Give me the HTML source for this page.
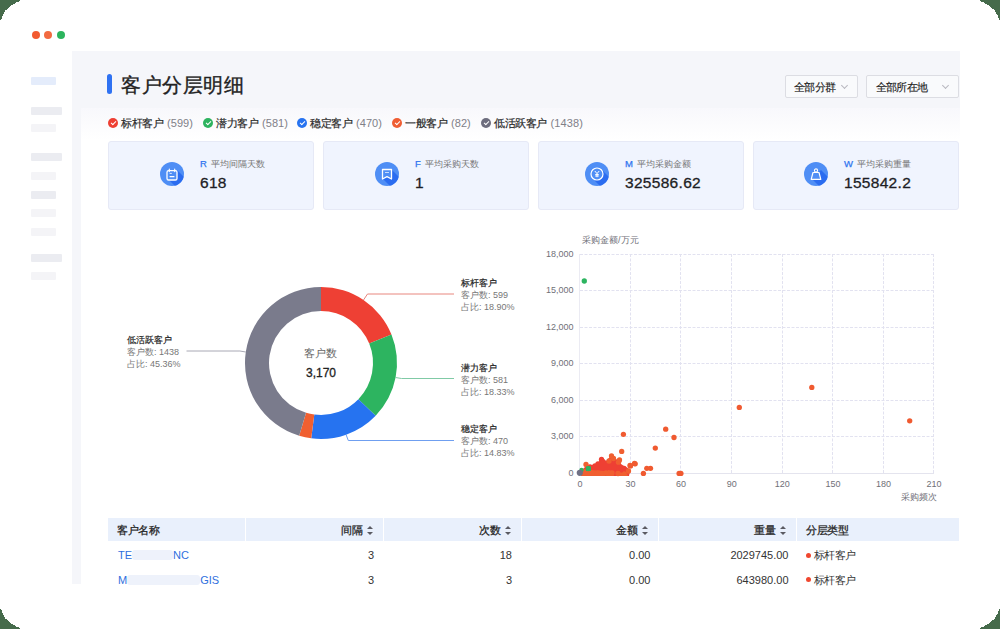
<!DOCTYPE html>
<html><head><meta charset="utf-8">
<style>
*{margin:0;padding:0;box-sizing:border-box}
html,body{width:1000px;height:629px;overflow:hidden;background:#466b4b;font-family:"Liberation Sans",sans-serif}
#win{position:absolute;left:0;top:0;width:1000px;height:629px;background:#fff;overflow:hidden}
.dot{position:absolute;width:8px;height:8px;border-radius:50%;top:30.5px}
.sb{position:absolute;left:31px;height:8px;border-radius:1px}
.sb.g{background:#ebecf1;width:31px}
.sb.l{background:#f4f4f7;width:25px}
#main{position:absolute;left:72px;top:51px;width:888px;height:533px;background:#f5f6fa}
#content{position:absolute;left:81px;top:108px;width:879px;height:476px;background:linear-gradient(#f8f8fc 0px,#fbfbfd 14px,#fff 32px)}
.abs{position:absolute;white-space:nowrap}

.dd{position:absolute;top:75px;height:23px;border:1px solid #dcdde3;border-radius:2px;background:#f9fafc}
.dd span{position:absolute;top:4px;font-size:11px;letter-spacing:-0.6px;line-height:14px;color:#222;-webkit-text-stroke:0.15px #222}
.dd i{position:absolute;top:7px;width:5px;height:5px;border-right:1px solid #b8b8c0;border-bottom:1px solid #b8b8c0;transform:rotate(45deg)}
.lg{position:absolute;top:115px;height:16px;white-space:nowrap;font-size:11px;letter-spacing:-0.4px;line-height:16px;color:#2a2a2a;-webkit-text-stroke:0.2px #2a2a2a}
.lg b{position:absolute;left:0;top:3px;width:10px;height:10px;border-radius:50%}
.lg b:after{content:"";position:absolute;left:3px;top:2.5px;width:4px;height:2px;border-left:1.3px solid #fff;border-bottom:1.3px solid #fff;transform:rotate(-45deg)}
.lg{padding-left:13px}
.lg em{font-style:normal;color:#808088;-webkit-text-stroke:0;margin-left:3.5px;letter-spacing:0.1px}

.card{position:absolute;top:141px;width:206px;height:69px;background:#f0f4fe;border:1px solid #e6e9f6;border-radius:3px}
.ico{position:absolute;top:20px;width:24px;height:24px;border-radius:50%;background:#4f8ef5;overflow:hidden}
.ico svg{position:absolute;left:0;top:0}
.klab{position:absolute;top:16px;font-size:8.9px;line-height:12px;color:#777;white-space:nowrap}
.klab b{color:#2f74ef;font-weight:400;-webkit-text-stroke:0.25px #2f74ef;margin-right:4px;font-size:9.5px}
.kval{position:absolute;top:30.5px;font-size:15.5px;letter-spacing:0.3px;line-height:20px;color:#1d1d24;font-weight:400;-webkit-text-stroke:0.3px #1d1d24;white-space:nowrap}

.dl{position:absolute;font-size:9px;line-height:12.3px;color:#777;white-space:nowrap}
.dl b{display:block;color:#222;font-weight:400;-webkit-text-stroke:0.2px #222}

.th{position:absolute;top:518px;height:23px;background:#e9f0fc;font-size:11px;line-height:25px;letter-spacing:-0.4px;color:#222;font-weight:400;-webkit-text-stroke:0.25px #222;white-space:nowrap}
.th.r{text-align:right}
.sort{display:inline-block;width:6px;height:9px;position:relative;margin-left:4.5px;vertical-align:-1px}
.sort:before{content:"";position:absolute;left:0;top:0;border-left:3px solid transparent;border-right:3px solid transparent;border-bottom:3.5px solid #5a5a62}
.sort:after{content:"";position:absolute;left:0;top:5.5px;border-left:3px solid transparent;border-right:3px solid transparent;border-top:3.5px solid #5a5a62}
.td{position:absolute;font-size:11px;line-height:14px;color:#333;white-space:nowrap}
.td.r{text-align:right}
.lnk{color:#2f6fde}
.blur{display:inline-block;height:10px;background:#eef2fb;vertical-align:-1px;border-radius:3px}
.rdot{display:inline-block;width:5px;height:5px;border-radius:50%;background:#f0472f;margin-right:2.5px;vertical-align:1.5px}
</style></head><body>
<div id="win">
  <div class="dot" style="left:32px;background:#f25a30"></div>
  <div class="dot" style="left:44px;background:#f26a40"></div>
  <div class="dot" style="left:57px;background:#2cb45d"></div>

  <div class="sb" style="left:31px;top:77px;width:25px;background:#e4ecfb"></div>
  <div class="sb g" style="top:107px"></div>
  <div class="sb l" style="top:124px"></div>
  <div class="sb g" style="top:153px"></div>
  <div class="sb l" style="top:172px"></div>
  <div class="sb g" style="top:191px;width:25px"></div>
  <div class="sb l" style="top:209px"></div>
  <div class="sb l" style="top:228px"></div>
  <div class="sb g" style="top:254px"></div>
  <div class="sb l" style="top:272px"></div>

  <div id="main"></div>
  <div id="content"></div>

  <div class="abs" style="left:107px;top:74px;width:5px;height:20px;border-radius:3px;background:#2f72f2"></div>
  <div class="abs" id="title" style="left:121px;top:72px;font-size:20px;letter-spacing:0.5px;-webkit-text-stroke:0.35px #222;line-height:26px;color:#222;font-weight:500">客户分层明细</div>

  <div class="dd" style="left:785px;width:73px"><span style="left:8px">全部分群</span><i style="left:56px"></i></div>
  <div class="dd" style="left:866px;width:93px"><span style="left:8.5px">全部所在地</span><i style="left:76px"></i></div>

  <div class="lg" style="left:108px"><b style="background:#ee3f33"></b><span>标杆客户</span><em>(599)</em></div>
  <div class="lg" style="left:203px"><b style="background:#2db35f"></b><span>潜力客户</span><em>(581)</em></div>
  <div class="lg" style="left:297px"><b style="background:#2773f0"></b><span>稳定客户</span><em>(470)</em></div>
  <div class="lg" style="left:392px"><b style="background:#ef5d33"></b><span>一般客户</span><em>(82)</em></div>
  <div class="lg" style="left:481px"><b style="background:#6d6d7e"></b><span>低活跃客户</span><em>(1438)</em></div>
  <div class="card" style="left:108px">
    <div class="ico" style="left:51px"><svg width="24" height="24" viewBox="0 0 24 24"><path d="M17 8 L32 23 L32 32 L23 32 L8 17 Z" fill="#2b6cf0"/><rect x="7" y="8.6" width="10" height="9.4" rx="1.6" fill="#4f8ef5" stroke="#fff" stroke-width="1.3"/><path d="M9.3 7.2v2.4M14.7 7.2v2.4" stroke="#fff" stroke-width="1.2" stroke-linecap="round"/><path d="M9.6 14.6h4.8" stroke="#fff" stroke-width="1.3"/><path d="M9.6 11.4h2.2" stroke="#fff" stroke-width="1" opacity=".8"/></svg></div>
    <div class="klab" style="left:91px"><b>R</b>平均间隔天数</div>
    <div class="kval" style="left:91px">618</div>
  </div>
  <div class="card" style="left:323px">
    <div class="ico" style="left:51px"><svg width="24" height="24" viewBox="0 0 24 24"><path d="M17 8 L32 23 L32 32 L23 32 L8 17 Z" fill="#2b6cf0"/><path d="M7.5 7.5h9v9.5l-4.5-2.3l-4.5 2.3z" fill="#4f8ef5" stroke="#fff" stroke-width="1.3" stroke-linejoin="round"/><path d="M10 10.5h4" stroke="#fff" stroke-width="1" opacity=".7"/></svg></div>
    <div class="klab" style="left:91px"><b>F</b>平均采购天数</div>
    <div class="kval" style="left:91px">1</div>
  </div>
  <div class="card" style="left:538px">
    <div class="ico" style="left:46px"><svg width="24" height="24" viewBox="0 0 24 24"><path d="M17 8 L32 23 L32 32 L23 32 L8 17 Z" fill="#2b6cf0"/><circle cx="12" cy="12" r="6" fill="#4f8ef5" stroke="#fff" stroke-width="1.2"/><path d="M9.8 9l2.2 2.6l2.2-2.6M12 11.6v3.6M10.2 12.6h3.6M10.2 14h3.6" stroke="#fff" stroke-width="1" fill="none"/></svg></div>
    <div class="klab" style="left:86px"><b>M</b>平均采购金额</div>
    <div class="kval" style="left:86px">325586.62</div>
  </div>
  <div class="card" style="left:753px">
    <div class="ico" style="left:50px"><svg width="24" height="24" viewBox="0 0 24 24"><path d="M17 8 L32 23 L32 32 L23 32 L8 17 Z" fill="#2b6cf0"/><circle cx="12" cy="8.5" r="1.6" fill="none" stroke="#fff" stroke-width="1.1"/><path d="M9 10.5h6l1.8 6.8h-9.6z" fill="#4f8ef5" stroke="#fff" stroke-width="1.2" stroke-linejoin="round"/></svg></div>
    <div class="klab" style="left:90px"><b>W</b>平均采购重量</div>
    <div class="kval" style="left:90px">155842.2</div>
  </div>
<!--CHARTS--><svg class="abs" style="left:0;top:0" width="1000" height="629" viewBox="0 0 1000 629">
<g><path d="M321.00 287.00A76 76 0 0 1 391.48 334.56L369.22 343.54A52 52 0 0 0 321.00 311.00Z" fill="#ee4034"/><path d="M391.48 334.56A76 76 0 0 1 375.66 415.80L358.40 399.13A52 52 0 0 0 369.22 343.54Z" fill="#2db460"/><path d="M375.66 415.80A76 76 0 0 1 311.24 438.37L314.32 414.57A52 52 0 0 0 358.40 399.13Z" fill="#2673f0"/><path d="M311.24 438.37A76 76 0 0 1 299.17 435.80L306.06 412.81A52 52 0 0 0 314.32 414.57Z" fill="#f05f30"/><path d="M299.17 435.80A76 76 0 0 1 321.00 287.00L321.00 311.00A52 52 0 0 0 306.06 412.81Z" fill="#7a7b8c"/></g><path d="M363.5 300L367.5 294H454" stroke="#e8877f" fill="none" stroke-width="1"/>
<path d="M395.6 377.5L401.5 378.5H454" stroke="#80caa6" fill="none" stroke-width="1"/>
<path d="M346.1 434.7L348.3 440.5H454" stroke="#6f9ff0" fill="none" stroke-width="1"/>
<path d="M245.8 352L239.9 351H186.5" stroke="#a8a8b4" fill="none" stroke-width="1"/>
<g><path d="M580 254.5H934" stroke="#e2e2f0" stroke-dasharray="3 1.5" stroke-width="1"/><path d="M580 290.5H934" stroke="#e2e2f0" stroke-dasharray="3 1.5" stroke-width="1"/><path d="M580 327.5H934" stroke="#e2e2f0" stroke-dasharray="3 1.5" stroke-width="1"/><path d="M580 363.5H934" stroke="#e2e2f0" stroke-dasharray="3 1.5" stroke-width="1"/><path d="M580 400.5H934" stroke="#e2e2f0" stroke-dasharray="3 1.5" stroke-width="1"/><path d="M580 436.5H934" stroke="#e2e2f0" stroke-dasharray="3 1.5" stroke-width="1"/><path d="M630.5 254V473" stroke="#e2e2f0" stroke-dasharray="3 1.5" stroke-width="1"/><path d="M680.5 254V473" stroke="#e2e2f0" stroke-dasharray="3 1.5" stroke-width="1"/><path d="M731.5 254V473" stroke="#e2e2f0" stroke-dasharray="3 1.5" stroke-width="1"/><path d="M782.5 254V473" stroke="#e2e2f0" stroke-dasharray="3 1.5" stroke-width="1"/><path d="M832.5 254V473" stroke="#e2e2f0" stroke-dasharray="3 1.5" stroke-width="1"/><path d="M883.5 254V473" stroke="#e2e2f0" stroke-dasharray="3 1.5" stroke-width="1"/><path d="M933.5 254V473" stroke="#e2e2f0" stroke-dasharray="3 1.5" stroke-width="1"/><path d="M579.5 254V473.5" stroke="#ebebf3" stroke-width="1"/><path d="M580 473.5H934" stroke="#e4e4ee" stroke-width="1"/></g>
<g font-family="Liberation Sans, sans-serif" font-size="9" fill="#707078"><text x="573.5" y="475.7" text-anchor="end">0</text><text x="573.5" y="439.2" text-anchor="end">3,000</text><text x="573.5" y="402.7" text-anchor="end">6,000</text><text x="573.5" y="366.2" text-anchor="end">9,000</text><text x="573.5" y="329.7" text-anchor="end">12,000</text><text x="573.5" y="293.2" text-anchor="end">15,000</text><text x="573.5" y="256.7" text-anchor="end">18,000</text><text x="580.0" y="486.8" text-anchor="middle">0</text><text x="630.6" y="486.8" text-anchor="middle">30</text><text x="681.1" y="486.8" text-anchor="middle">60</text><text x="731.7" y="486.8" text-anchor="middle">90</text><text x="782.3" y="486.8" text-anchor="middle">120</text><text x="832.9" y="486.8" text-anchor="middle">150</text><text x="883.4" y="486.8" text-anchor="middle">180</text><text x="934.0" y="486.8" text-anchor="middle">210</text>
<text x="582" y="242.5">采购金额/万元</text><text x="937" y="499.5" text-anchor="end">采购频次</text></g>
<g><path d="M582 476L582 470L586 466L592 465L598 463L602 457L606 461L610 457L614 458L618 460L621 464L624 466L628 468L630 471L629 476Z" fill="#ee4034"/><path d="M581 476L581 470L590 470L605 471L605 476Z" fill="#f05f30"/><path d="M606 476L608 470L612 471L614 476Z" fill="#f05f30"/><path d="M617 476L622 470L626 472L628 476Z" fill="#f05f30"/><circle cx="590" cy="467" r="2.65" fill="#ee4034"/><circle cx="595" cy="466" r="2.65" fill="#ee4034"/><circle cx="598" cy="464" r="2.65" fill="#ee4034"/><circle cx="601.5" cy="459.5" r="2.65" fill="#ee4034"/><circle cx="603" cy="462" r="2.65" fill="#ee4034"/><circle cx="606" cy="465" r="2.65" fill="#ee4034"/><circle cx="624" cy="468.5" r="2.65" fill="#ee4034"/><circle cx="621" cy="470" r="2.65" fill="#ee4034"/><circle cx="614" cy="468" r="2.65" fill="#ee4034"/><circle cx="583.5" cy="471.5" r="2.65" fill="#f05f30"/><circle cx="586" cy="464.5" r="2.65" fill="#f05f30"/><circle cx="609" cy="461" r="2.65" fill="#f05f30"/><circle cx="611.5" cy="456" r="2.65" fill="#f05f30"/><circle cx="613.5" cy="458.5" r="2.65" fill="#f05f30"/><circle cx="618.5" cy="462.2" r="2.65" fill="#f05f30"/><circle cx="619.5" cy="460" r="2.65" fill="#f05f30"/><circle cx="621.7" cy="451.4" r="2.65" fill="#f05f30"/><circle cx="628.5" cy="471" r="2.65" fill="#f05f30"/><circle cx="630" cy="465.5" r="2.65" fill="#f05f30"/><circle cx="634.5" cy="463.5" r="2.65" fill="#f05f30"/><circle cx="585" cy="473" r="2.65" fill="#f05f30"/><circle cx="592" cy="473" r="2.65" fill="#f05f30"/><circle cx="598" cy="473" r="2.65" fill="#f05f30"/><circle cx="606" cy="473" r="2.65" fill="#f05f30"/><circle cx="612" cy="473" r="2.65" fill="#f05f30"/><circle cx="618" cy="473.5" r="2.65" fill="#f05f30"/><circle cx="665.7" cy="429.2" r="2.65" fill="#f05a30"/><circle cx="674.0" cy="437.5" r="2.65" fill="#f05a30"/><circle cx="655.3" cy="448.1" r="2.65" fill="#f05a30"/><circle cx="679.1" cy="473.4" r="2.65" fill="#f05a30"/><circle cx="680.9" cy="473.4" r="2.65" fill="#f05a30"/><circle cx="739.3" cy="407.4" r="2.65" fill="#f05a30"/><circle cx="811.8" cy="387.4" r="2.65" fill="#f05a30"/><circle cx="909.7" cy="420.8" r="2.65" fill="#f05a30"/><circle cx="635.2" cy="463.8" r="2.65" fill="#f05a30"/><circle cx="630.5" cy="465.9" r="2.65" fill="#f05a30"/><circle cx="643.4" cy="473.4" r="2.65" fill="#f05a30"/><circle cx="646.8" cy="468.3" r="2.65" fill="#f05a30"/><circle cx="650.5" cy="468.3" r="2.65" fill="#f05a30"/><circle cx="623.4" cy="434.3" r="2.65" fill="#f05a30"/><circle cx="584.3" cy="281" r="2.65" fill="#2db460"/><path d="M586 466.5h5v4.5h-5z" fill="#2db460"/><circle cx="588.3" cy="468.6" r="2.6" fill="#2db460"/><circle cx="581.5" cy="470" r="2.2" fill="#2db460"/><circle cx="579.8" cy="472.8" r="3.1" fill="#6f7084"/></g>
</svg><!--/CHARTS-->
  <div class="abs" style="left:304px;top:346px;font-size:11px;line-height:14px;color:#666">客户数</div>
  <div class="abs" style="left:306px;top:365px;font-size:12px;line-height:16px;color:#222;-webkit-text-stroke:0.3px #222">3,170</div>
  <div class="dl" style="left:461px;top:276.5px"><b>标杆客户</b>客户数: 599<br>占比: 18.90%</div>
  <div class="dl" style="left:461px;top:361.5px"><b>潜力客户</b>客户数: 581<br>占比: 18.33%</div>
  <div class="dl" style="left:461px;top:422.5px"><b>稳定客户</b>客户数: 470<br>占比: 14.83%</div>
  <div class="dl" style="left:127px;top:333.5px"><b>低活跃客户</b>客户数: 1438<br>占比: 45.36%</div>
  <div class="th" style="left:108px;width:137px;padding-left:9px">客户名称</div>
  <div class="th r" style="left:246px;width:137px;padding-right:10px">间隔<span class="sort"></span></div>
  <div class="th r" style="left:384px;width:137px;padding-right:10px">次数<span class="sort"></span></div>
  <div class="th r" style="left:522px;width:136px;padding-right:10px">金额<span class="sort"></span></div>
  <div class="th r" style="left:659px;width:137px;padding-right:10px">重量<span class="sort"></span></div>
  <div class="th" style="left:797px;width:162px;padding-left:9px">分层类型</div>
  <div class="td lnk" style="left:118px;top:548px">TE<span class="blur" style="width:41px"></span>NC</div>
  <div class="td r" style="left:246px;top:548px;width:137px;padding-right:9px">3</div>
  <div class="td r" style="left:384px;top:548px;width:137px;padding-right:9px">18</div>
  <div class="td r" style="left:522px;top:548px;width:136px;padding-right:7.5px">0.00</div>
  <div class="td r" style="left:659px;top:548px;width:137px;padding-right:7.5px">2029745.00</div>
  <div class="td" style="left:806px;letter-spacing:-0.4px;top:548px"><span class="rdot"></span>标杆客户</div>
  <div class="td lnk" style="left:118px;top:572.5px">M<span class="blur" style="width:73px"></span>GIS</div>
  <div class="td r" style="left:246px;top:572.5px;width:137px;padding-right:9px">3</div>
  <div class="td r" style="left:384px;top:572.5px;width:137px;padding-right:9px">3</div>
  <div class="td r" style="left:522px;top:572.5px;width:136px;padding-right:7.5px">0.00</div>
  <div class="td r" style="left:659px;top:572.5px;width:137px;padding-right:7.5px">643980.00</div>
  <div class="td" style="left:806px;letter-spacing:-0.4px;top:572.5px"><span class="rdot"></span>标杆客户</div>
<svg class="abs" style="left:0;top:0;z-index:10" width="1000" height="629" shape-rendering="crispEdges" fill="#466b4b"><path d="M0.00 0.00 L20.50 0.00 L19.80 0.50 L18.70 1.50 L16.00 2.50 L14.70 3.50 L12.60 4.50 L11.00 5.50 L9.90 6.50 L8.80 7.50 L7.60 8.50 L6.50 9.50 L5.30 10.50 L4.80 11.50 L4.40 12.50 L3.90 13.50 L3.20 14.50 L2.50 15.50 L2.00 16.50 L1.90 17.50 L1.50 18.50 L0.80 19.50 L0.00 20.50Z"/><path d="M1000.00 0.00 L979.50 0.00 L980.20 0.50 L981.30 1.50 L984.00 2.50 L985.30 3.50 L987.40 4.50 L989.00 5.50 L990.10 6.50 L991.20 7.50 L992.40 8.50 L993.50 9.50 L994.70 10.50 L995.20 11.50 L995.60 12.50 L996.10 13.50 L996.80 14.50 L997.50 15.50 L998.00 16.50 L998.10 17.50 L998.50 18.50 L999.20 19.50 L1000.00 20.50Z"/><path d="M0.00 629.00 L20.50 629.00 L19.80 628.50 L18.70 627.50 L16.00 626.50 L14.70 625.50 L12.60 624.50 L11.00 623.50 L9.90 622.50 L8.80 621.50 L7.60 620.50 L6.50 619.50 L5.30 618.50 L4.80 617.50 L4.40 616.50 L3.90 615.50 L3.20 614.50 L2.50 613.50 L2.00 612.50 L1.90 611.50 L1.50 610.50 L0.80 609.50 L0.00 608.50Z"/><path d="M1000.00 629.00 L979.50 629.00 L980.20 628.50 L981.30 627.50 L984.00 626.50 L985.30 625.50 L987.40 624.50 L989.00 623.50 L990.10 622.50 L991.20 621.50 L992.40 620.50 L993.50 619.50 L994.70 618.50 L995.20 617.50 L995.60 616.50 L996.10 615.50 L996.80 614.50 L997.50 613.50 L998.00 612.50 L998.10 611.50 L998.50 610.50 L999.20 609.50 L1000.00 608.50Z"/></svg>
</div>
</body></html>
